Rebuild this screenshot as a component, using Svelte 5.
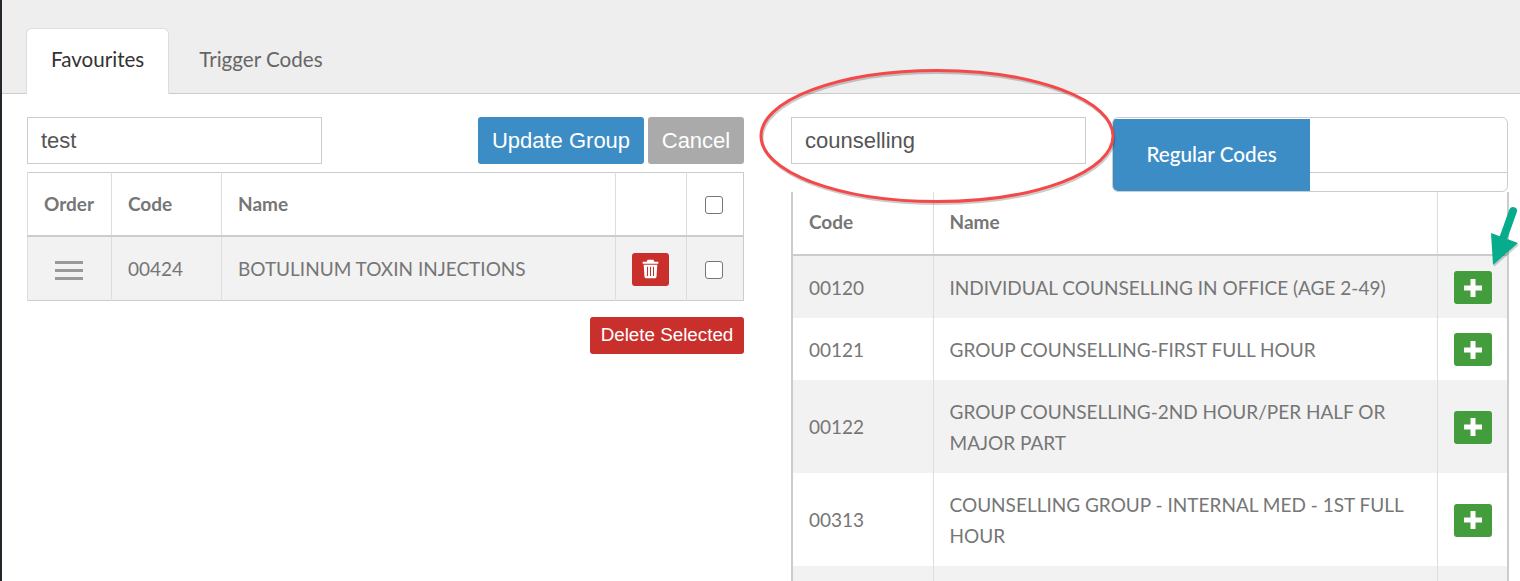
<script>
  const codes = [
    { code: '00120', name: 'INDIVIDUAL COUNSELLING IN OFFICE (AGE 2-49)' },
    { code: '00121', name: 'GROUP COUNSELLING-FIRST FULL HOUR' },
    { code: '00122', name: 'GROUP COUNSELLING-2ND HOUR/PER HALF OR MAJOR PART' },
    { code: '00313', name: 'COUNSELLING GROUP - INTERNAL MED - 1ST FULL HOUR' }
  ];
</script>

<div class="page">
  <nav class="tabs">
    <button class="tab active">Favourites</button>
    <button class="tab">Trigger Codes</button>
  </nav>

  <div class="content">
    <section class="left">
      <div class="bar">
        <input class="field" value="test" />
        <button class="btn blue">Update Group</button>
        <button class="btn grey">Cancel</button>
      </div>
      <table class="fav">
        <colgroup>
          <col style="width: 84px" /><col style="width: 110px" /><col /><col style="width: 71px" /><col style="width: 57px" />
        </colgroup>
        <thead>
          <tr>
            <th>Order</th>
            <th>Code</th>
            <th>Name</th>
            <th></th>
            <th class="mid"><input type="checkbox" class="check" /></th>
          </tr>
        </thead>
        <tbody>
          <tr>
            <td class="mid">
              <span class="drag"><i></i><i></i><i></i></span>
            </td>
            <td>00424</td>
            <td>BOTULINUM TOXIN INJECTIONS</td>
            <td class="mid">
              <button class="icon red" aria-label="Delete">
                <svg width="17" height="20" viewBox="0 0 13 15">
                  <path fill="#fff" d="M4.300 0.500h4.400l.8 1.500h3v1.500H.5V2h3zM1.300 4.200h10.400l-.6 9.300c0 .6-.5 1-1 1H2.900c-.5 0-1-.4-1-1z" />
                  <path stroke="#c9302c" stroke-width="0.8" d="M4.200 5.800v7M6.500 5.800v7M8.800 5.800v7" />
                </svg>
              </button>
            </td>
            <td class="mid"><input type="checkbox" class="check" /></td>
          </tr>
        </tbody>
      </table>
      <div class="actions">
        <button class="btn-small">Delete Selected</button>
      </div>
    </section>

    <section class="right">
      <div class="bar right-bar">
        <input class="field" value="counselling" />
        <div class="pills">
          <div class="pill">Regular Codes</div>
        </div>
      </div>
      <table class="search">
        <colgroup>
          <col style="width: 141px" /><col /><col style="width: 71px" />
        </colgroup>
        <thead>
          <tr>
            <th>Code</th>
            <th>Name</th>
            <th></th>
          </tr>
        </thead>
        <tbody>
          {#each codes as row}
            <tr>
              <td>{row.code}</td>
              <td>{row.name}</td>
              <td class="mid">
                <button class="icon green" aria-label="Add">
                  <svg width="18" height="18" viewBox="0 0 18 18">
                    <path fill="#fff" d="M6.500 0h5v6.500H18v5h-6.500V18h-5v-6.500H0v-5h6.500z" />
                  </svg>
                </button>
              </td>
            </tr>
          {/each}
          <tr class="filler"><td></td><td></td><td></td></tr>
        </tbody>
      </table>
    </section>
  </div>

  <svg class="mark ellipse" width="370" height="150" viewBox="0 0 370 150">
    <ellipse cx="178" cy="68" rx="176" ry="65.500" fill="none" stroke="#000" stroke-opacity="0.2" stroke-width="3" transform="translate(1 2)" />
    <ellipse cx="178" cy="68" rx="176" ry="65.500" fill="none" stroke="#f54848" stroke-width="3" />
  </svg>
  <svg class="mark arrow" width="36" height="66" viewBox="0 0 36 66">
    <g fill="#000" opacity="0.18" transform="translate(1 2)">
      <path d="M5 30 L32 40 L7 62 Z" />
    </g>
    <path d="M27 8 L17 36" stroke="#06ac8c" stroke-width="8" stroke-linecap="round" fill="none" />
    <path d="M5 30 L32 40 L7 62 Z" fill="#06ac8c" />
  </svg>
</div>

<style>
  :global(body) {
    margin: 0;
    background: #fff;
    font-family: Lato, 'Open Sans', sans-serif;
    overflow: hidden;
  }

  .page {
    position: relative;
    height: 581px;
    overflow: hidden;
    border-left: 2px solid #23282d;
    box-sizing: border-box;
    color: #767676;
  }

  .page::before {
    content: '';
    position: absolute;
    left: -2px;
    top: 0;
    width: 2px;
    height: 11px;
    background: #2a6a94;
  }

  .tabs {
    display: flex;
    align-items: flex-end;
    gap: 5px;
    height: 94px;
    box-sizing: border-box;
    padding-left: 24px;
    background: #eee;
    border-bottom: 1px solid #ccc;
  }

  .tab {
    height: 66px;
    margin-bottom: -1px;
    padding: 0 24px 4px;
    border: 1px solid transparent;
    border-bottom: 0;
    background: transparent;
    font: 20.600px/1 Lato, 'Open Sans', sans-serif;
    color: #666;
  }

  .tab.active {
    background: #fff;
    color: #333;
    border-color: #ddd;
    border-radius: 6px 6px 0 0;
  }

  .content {
    display: flex;
    padding: 23px 12px 0 25px;
    gap: 47px;
  }

  .left {
    width: 717px;
    flex: none;
  }

  .right {
    width: 717px;
    flex: none;
  }

  .bar {
    display: flex;
    align-items: flex-start;
    height: 55px;
    gap: 4px;
  }

  .field {
    width: 295px;
    height: 47px;
    margin-right: auto;
    padding: 0 13px;
    box-sizing: border-box;
    border: 1px solid #ccc;
    font: 22px 'Liberation Sans', sans-serif;
    color: #555;
    outline: none;
  }

  .btn {
    height: 47px;
    padding: 0;
    border: 0;
    border-radius: 3px;
    color: #fff;
    font: 22px 'Liberation Sans', sans-serif;
  }

  .blue {
    width: 166px;
    background: #3c8dc5;
  }

  .grey {
    width: 96px;
    background: #aaa;
  }

  .right-bar {
    height: 75px;
    gap: 26px;
  }

  .pills {
    flex: 1;
    height: 75px;
    box-sizing: border-box;
    border: 1px solid #ccc;
    border-radius: 6px;
    overflow: hidden;
    background: linear-gradient(#fff 54px, #ccc 54px, #ccc 55px, #fff 55px);
  }

  .pill {
    width: 197px;
    height: 72px;
    margin-top: 1px;
    box-sizing: border-box;
    padding-top: 22px;
    text-align: center;
    background: #3c8dc5;
    color: #fff;
    font-size: 20.700px;
    line-height: 26px;
    font-weight: 500;
  }

  table {
    width: 100%;
    border-collapse: collapse;
    table-layout: fixed;
    font-size: 19px;
  }

  th {
    text-align: left;
    font-size: 19px;
    font-weight: 700;
    padding: 0 16px;
    height: 63px;
    box-sizing: border-box;
    border-left: 1px solid #ddd;
    border-bottom: 2px solid #ccc;
  }

  .search th {
    padding-bottom: 3px;
  }

  td {
    padding: 15.5px 16px;
    line-height: 31px;
    border-left: 1px solid #ddd;
  }

  tbody tr:nth-child(odd) td {
    background: #f2f2f2;
  }

  .fav {
    border: 1px solid #ccc;
  }

  .fav td {
    height: 65px;
    box-sizing: border-box;
    padding: 0 16px;
  }

  .search {
    width: calc(100% + 1px);
    border-left: 2px solid #ccc;
    border-right: 2px solid #ccc;
  }

  .search th:first-child,
  .search td:first-child {
    border-left: 0;
  }

  .mid,
  .fav .mid {
    text-align: center;
    padding: 0;
  }

  .check {
    width: 18px;
    height: 18px;
    margin: 0 2px 2px 0;
    vertical-align: middle;
    appearance: none;
    border: 1.5px solid #767676;
    border-radius: 3px;
    background: #fff;
  }

  .drag {
    display: inline-flex;
    flex-direction: column;
    gap: 5px;
    margin-right: 2px;
    vertical-align: middle;
  }

  .drag i {
    display: block;
    width: 28px;
    height: 3px;
    background: #999;
  }

  .icon {
    display: inline-flex;
    align-items: center;
    justify-content: center;
    padding: 0;
    border: 0;
    border-radius: 3px;
    vertical-align: middle;
  }

  .red {
    width: 37px;
    height: 33px;
    margin-right: 1px;
    background: #c9302c;
  }

  .green {
    width: 38px;
    height: 33px;
    margin-left: 1px;
    background: #449d3c;
  }

  .actions {
    display: flex;
    justify-content: flex-end;
    margin-top: 16px;
  }

  .btn-small {
    width: 154px;
    height: 37px;
    padding: 0 0 2px;
    border: 0;
    border-radius: 3px;
    background: #c9302c;
    color: #fff;
    font: 18.800px 'Liberation Sans', sans-serif;
  }

  .mark {
    position: absolute;
    pointer-events: none;
  }

  .ellipse {
    left: 757px;
    top: 68px;
  }

  .arrow {
    left: 1484px;
    top: 203px;
  }
</style>
